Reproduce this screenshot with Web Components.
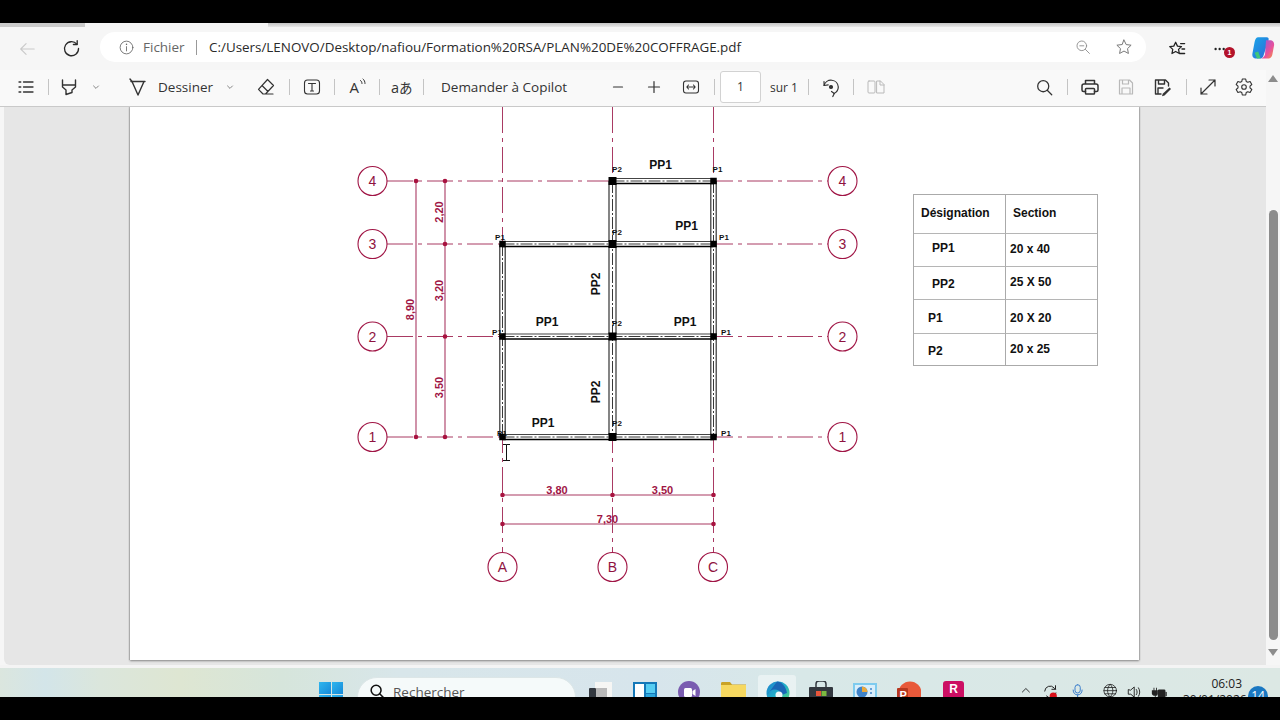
<!DOCTYPE html>
<html lang="fr"><head><meta charset="utf-8"><title>PLAN DE COFFRAGE</title>
<style>html,body{margin:0;background:#000;width:1280px;height:720px;overflow:hidden}</style></head>
<body>
<app-shell>
  <browser-bar></browser-bar>
  <viewer-area>
    <pdf-toolbar></pdf-toolbar>
    <pdf-view>
      <plan-drawing></plan-drawing>
      <spec-table></spec-table>
    </pdf-view>
  </viewer-area>
  <win-taskbar></win-taskbar>
</app-shell>
<script>
const S=(b,w=1.3)=>`<g fill="none" stroke="currentColor" stroke-width="${w}" stroke-linecap="round" stroke-linejoin="round">${b}</g>`;
const ICONS={
 back:S('<path d="M18 10H3M9 4 3 10l6 6"/>',1.2),
 refresh:S('<path d="M15.6 5.4A7.4 7.4 0 1 0 17.4 10"/><path d="M16 1.8v4h-4"/>',1.4),
 info:S('<circle cx="10" cy="10" r="7.5"/><path d="M10 9v5"/><path d="M10 6v.4" stroke-width="1.6"/>',1),
 zoomout:S('<circle cx="8.5" cy="8.5" r="6"/><path d="M13 13l5 5M6 8.5h5"/>',1.1),
 star:S('<path d="M10 2.3l2.4 5 5.5.7-4 3.8 1 5.4-4.900-2.700-4.900 2.700 1-5.400-4-3.800 5.500-.7z"/>',1.1),
 fav:S('<path d="M8.500 2.500l2 4.300 4.500.5-3.300 3.100.9 4.600-4.100-2.300-4.100 2.300.9-4.600L1.900 7.300l4.500-.5z"/><path d="M14 4h4.500M15.500 10h3M13 15h5.500"/>',1.4),
 dots:'<g fill="#222"><circle cx="4" cy="10" r="1.300"/><circle cx="8.500" cy="10" r="1.300"/><circle cx="13" cy="10" r="1.300"/></g>',
 copilot:'<defs><linearGradient id="c1" x1="0" y1="0" x2="1" y2="1"><stop offset="0" stop-color="#19a5e8"/><stop offset="1" stop-color="#2c6bd8"/></linearGradient><linearGradient id="c2" x1="0" y1="0" x2="1" y2="1"><stop offset="0" stop-color="#8a5be0"/><stop offset=".6" stop-color="#e8509c"/><stop offset="1" stop-color="#f59a3c"/></linearGradient></defs><path d="M6 1h7c1.500 0 2 1 1.600 2.500L10.500 16c-.5 1.800-1.500 2.800-3.500 2.800H4.500C2 18.800.7 17 1.200 14.500L3 5C3.500 2.500 4.500 1 6 1z" fill="url(#c1)"/><path d="M12.500 3.500h3.500c2.500 0 3.600 2 3.200 4.500l-1.400 7.500c-.5 2.300-2 3.300-4 3.300H8.500c2-.6 2.700-1.800 3.200-3.500z" fill="url(#c2)"/><path d="M3 14l3-1 2 5.500-3 .3z" fill="#3fc67a"/>',
 list:S('<path d="M3 5h1.800M3 10h1.800M3 15h1.800M7.500 5H17M7.500 10H17M7.500 15H17"/>',1.3),
 highlight:S('<path d="M3.500 3v7l3.500 3v4.500l6-2V13l3.500-3V3M3.500 8h13"/>',1.4),
 chev:S('<path d="M6.500 8.500 10 12l3.500-3.500"/>',1),
 draw:S('<path d="M3 4.500h14M4 4.500 10 18l6-13.500"/><path d="M2 2l2 2.500"/>',1.4),
 eraser:S('<path d="M11.500 2.500l6 6-8 8.500H7L2.500 12.300zM6 8.500l6 6M7 17h10"/>',1.2),
 textbox:S('<rect x="2.500" y="3" width="15" height="14" rx="3"/><path d="M6.500 6.500h7M10 6.500V14M8.500 14h3"/>',1.1),
 read:'<text x="2.500" y="15.500" font-family="Open Sans,sans-serif" font-size="15" fill="currentColor">A</text>'+S('<path d="M13.500 3.500c1 .8 1.500 1.700 1.500 3M16 2c1.300 1 2 2.500 2 4.500"/>',1),
 translate:'<text x="-1" y="15.500" font-family="Open Sans,Noto Sans CJK JP,sans-serif" font-size="14.500" fill="currentColor">a</text><text x="7" y="15.500" font-family="Noto Sans CJK JP,sans-serif" font-size="13.500" fill="currentColor">あ</text>',
 minus:S('<path d="M5.500 10h9"/>',1.2),
 plus:S('<path d="M4.500 10h11M10 4.500v11"/>',1.2),
 fit:S('<rect x="2.500" y="4" width="15" height="12" rx="2.500"/><path d="M6 10h8M7.500 8 5.800 10l1.700 2M12.500 8l1.700 2-1.700 2"/>',1.1),
 rotate:S('<path d="M3 8.500A7.300 7.300 0 0 1 17.300 10a7.300 7.300 0 0 1-4.300 6.500"/><path d="M3 4.500l.2 4 4-.7M10.500 14.500l2.800 2-1.500 3"/><circle cx="10" cy="10" r="1.500" fill="currentColor"/>',1.2),
 twopage:S('<rect x="2" y="4" width="7" height="12" rx="1"/><path d="M11 4h3.500l3.500 3.500V16h-7zM14 4v4h4"/>',1),
 search:S('<circle cx="8.500" cy="8.500" r="6.500"/><path d="M13.200 13.200l5.300 5.300"/>',1.500),
 print:S('<path d="M5.500 7V3.500h9V7M5.500 14.500H3.500a1.500 1.500 0 0 1-1.500-1.500V9a2 2 0 0 1 2-2h12a2 2 0 0 1 2 2v4a1.500 1.500 0 0 1-1.500 1.500h-2"/><rect x="5.500" y="11.500" width="9" height="5.500" rx=".8"/>',1.5),
 save:S('<path d="M3.500 3h10l3 3v11h-13zM6.500 3v4h6V3M6 17v-6h8v6"/>',1.2),
 saveas:S('<path d="M9 17H3.500V3h10l3 3v3M6.500 3v4h6V3M6 17v-6h5"/>',1.4)+'<path d="M17.500 10.500l1.500 1.500-6.500 6.500-2.500.8.700-2.600z" fill="currentColor"/>',
 expand:S('<path d="M3 17 17 3M11 3h6v6M3 11v6h6"/>',1.2),
 gear:S('<circle cx="10" cy="10" r="2.300"/><path d="M8.300 2h3.400l.5 2.400 1.600.9 2.300-.8 1.700 3-1.800 1.600v1.800l1.800 1.600-1.700 3-2.300-.8-1.600.9-.5 2.400H8.300l-.5-2.400-1.600-.9-2.300.8-1.700-3 1.800-1.600V9.100L2.200 7.500l1.700-3 2.300.8 1.600-.9z"/>',1.100),
 tsearch:S('<circle cx="9" cy="8" r="5.500"/><path d="M13 12l5 5"/>',1.700),
 tchev:S('<path d="M2 10l5-5 5 5"/>',1.200),
 sync:S('<path d="M3 9a6 6 0 0 1 10.500-3.500L15 7M15 3v4h-4M15.500 11a6 6 0 0 1-10.500 3.500"/>',1.100)+'<circle cx="12.500" cy="14.500" r="4" fill="#d9101a"/>',
 mic:S('<rect x="4" y="1" width="7" height="11" rx="3.500"/><path d="M1.500 8c0 4 2.500 6.500 6 6.500s6-2.500 6-6.500M7.500 14.500V18"/>',1.200),
 globe:S('<circle cx="8" cy="8.500" r="7"/><path d="M1 8.500h14M8 1.500c-4 4-4 10 0 14M8 1.500c4 4 4 10 0 14M2 5h12M2 12h12"/>',.9),
 speaker:S('<path d="M1.500 7v5h3l4 3.500v-12L4.500 7zM11 6.500c1.200 2 1.200 4 0 6M13.500 4.500c2 3 2 7 0 10"/>',1.100),
 battery:'<path d="M1 5h2V2h1v3h2V2h1v3h1v4c0 1.500-1 2.500-2.500 2.500V18h-1v-6.500C3 11.500 1 10.500 1 9z" fill="#222"/><rect x="8" y="4" width="9" height="11" rx="1.500" fill="#222"/><rect x="17" y="7" width="1.500" height="5" fill="#222"/>'
};
class UiIcon extends HTMLElement{
 connectedCallback(){
  const n=this.getAttribute('name'),s=+(this.getAttribute('size')||20),c=this.getAttribute('color')||'#333';
  this.attachShadow({mode:'open'}).innerHTML=`<style>:host{display:block;flex:none;width:${s}px;height:${s}px;color:${c}}svg{display:block;width:100%;height:100%;overflow:visible}</style><svg viewBox="0 0 20 20">${ICONS[n]||''}</svg>`;
 }
}
customElements.define('ui-icon',UiIcon);

class AppShell extends HTMLElement{constructor(){super();this.attachShadow({mode:'open'}).innerHTML=`<style>:host{display:flex;flex-direction:column;width:1280px;height:720px;box-sizing:border-box;padding:23px 0;background:#000;overflow:hidden;font-family:"Open Sans","Liberation Sans",sans-serif}</style><slot></slot>`}}
customElements.define('app-shell',AppShell);

class BrowserBar extends HTMLElement{constructor(){super();this.attachShadow({mode:'open'}).innerHTML=`<style>
:host{display:block;height:47px;background:#f6f6f6;flex:none}
.strip{display:flex;height:4px}
.strip i{display:block}
.a{width:85px;background:#cbcbcb}.b{width:183px;background:#f5f5f5}.c{flex:1;background:linear-gradient(#c4c4c4,#e8e8e8)}
.row{display:flex;align-items:center;height:43px;position:relative}
.pill{display:flex;align-items:center;width:1046px;height:30px;margin:-3px 0 0 19px;background:#fff;border-radius:15px;flex:none;font-size:13.5px;color:#2a2a2a;white-space:nowrap}
.fi{color:#666;margin-left:8px;width:40px}
.sep{width:1px;height:15px;background:#999;margin:0 12px 0 13px}
.url{width:535px;font-size:13.42px;flex:none}
.bd{position:absolute;left:1224px;top:20px;width:11px;height:11px;border-radius:50%;background:#b3122a;color:#fff;font:bold 7px/11px "Liberation Sans",sans-serif;text-align:center}
</style><div class="strip"><i class="a"></i><i class="b"></i><i class="c"></i></div>
<div class="row">
 <ui-icon name="back" size="18" color="#c9c9c9" style="margin-left:18px"></ui-icon>
 <ui-icon name="refresh" size="19" color="#2a2a2a" style="margin-left:26px"></ui-icon>
 <div class="pill">
  <ui-icon name="info" size="17" color="#666" style="margin-left:18px"></ui-icon>
  <span class="fi">Fichier</span><span class="sep"></span>
  <span class="url">C:/Users/LENOVO/Desktop/nafiou/Formation%20RSA/PLAN%20DE%20COFFRAGE.pdf</span>
  <ui-icon name="zoomout" size="16" color="#8a8a8a" style="margin-left:331px"></ui-icon>
  <ui-icon name="star" size="18" color="#777" style="margin-left:24px"></ui-icon>
 </div>
 <ui-icon name="fav" size="18" color="#222" style="margin-left:22px"></ui-icon>
 <ui-icon name="dots" size="18" style="margin-left:26px"></ui-icon>
 <ui-icon name="copilot" size="24" style="margin-left:21px;margin-top:-1px"></ui-icon>
 <span class="bd">1</span>
</div>`;
}}
customElements.define('browser-bar',BrowserBar);

class ViewerArea extends HTMLElement{constructor(){super();this.attachShadow({mode:'open'}).innerHTML=`<style>
:host{display:flex;height:595px;flex:none;background:#f6f6f6}
.main{width:1266px;display:flex;flex-direction:column;flex:none}
.sb{flex:1;display:flex;flex-direction:column;align-items:center;padding-top:5px;box-sizing:border-box}
.up,.dn{width:0;height:0;border-left:5px solid transparent;border-right:5px solid transparent;flex:none}
.up{border-bottom:7px solid #8c8c8c}
.dn{border-top:7px solid #8c8c8c;margin-top:9px}
.th{width:9px;height:430px;margin-top:128px;background:#8c8c8c;border-radius:5px;flex:none}
</style><div class="main"><slot></slot></div><div class="sb"><div class="up"></div><div class="th"></div><div class="dn"></div></div>`}}
customElements.define('viewer-area',ViewerArea);

class PdfToolbar extends HTMLElement{constructor(){super();
 const items=[['i','list',16],['s',0,12],['i','highlight',10],['c','chev',12],['i','draw',27],['t','Dessiner',10,53],['c','chev',14],['i','eraser',21],['s',0,13],['i','textbox',12],['s',0,12],['i','read',12],['s',0,12],['i','translate',12],['s',0,11],['t','Demander à Copilot',17,125],['i','minus',42],['i','plus',16],['i','fit',17],['s',0,13],['b','1',5],['t','sur 1',9,26],['s',0,12],['i','rotate',12],['s',0,12],['l','twopage',12],['i','search',150,0,17],['s',0,14],['i','print',12],['l','save',16],['i','saveas',16],['s',0,14],['i','expand',11],['i','gear',16]];
 const h=items.map(([k,v,m,w,z])=>{
  if(k=='s')return `<span class="sep" style="margin-left:${m}px"></span>`;
  if(k=='t')return `<span class="t" style="margin-left:${m}px;width:${w}px;${w==26?'font-size:12px':''}">${v}</span>`;
  if(k=='b')return `<span class="box" style="margin-left:${m}px">${v}</span>`;
  if(k=='c')return `<ui-icon name="${v}" size="14" color="#555" style="margin-left:${m-2}px;margin-right:-2px"></ui-icon>`;
  return `<ui-icon name="${v}" ${z?`size="${z}"`:''} color="${k=='l'?'#b9b9b9':'#333'}" style="margin-left:${m}px"></ui-icon>`;
 }).join('');
 this.attachShadow({mode:'open'}).innerHTML=`<style>
:host{display:flex;align-items:center;height:37px;flex:none;background:#f9f9f9;border-bottom:1px solid #c9c9c9;box-sizing:border-box;padding-bottom:2px;font-size:13.5px;color:#333}
.sep{width:1px;height:16px;background:#c4c4c4;flex:none}
.t{flex:none;white-space:nowrap}
.box{flex:none;width:41px;height:32px;box-sizing:border-box;border:1px solid #d2d2d2;border-radius:3px;background:#fff;text-align:center;line-height:30px;font-size:12px}
</style>${h}`}}
customElements.define('pdf-toolbar',PdfToolbar);

class PdfView extends HTMLElement{constructor(){super();this.attachShadow({mode:'open'}).innerHTML=`<style>
:host{display:block;flex:1;margin-left:4px;background:#e6e6e6;border-bottom-left-radius:6px;min-height:0;overflow:hidden}
.page{display:flex;width:1009px;height:553px;margin-left:126px;background:#fff;box-shadow:0 1px 2px #888,-1px 0 1px #bbb,1px 0 1px #bbb}
</style><div class="page"><slot></slot></div>`}}
customElements.define('pdf-view',PdfView);

class PlanDrawing extends HTMLElement{constructor(){super();
 const R='#a93a63',D='#a01545',X=[502.5,612.5,713.5],Y=[181,244,336.5,437];
 let o='';
 const l=(a,b,c,d,s,w,da)=>`<line x1="${a}" y1="${b}" x2="${c}" y2="${d}" stroke="${s}" stroke-width="${w}"${da?` stroke-dasharray="${da}"`:''}/>`;
 const ax='26 5 4 5';
 Y.forEach(y=>{o+=l(387,y,828,y,R,1,ax)});
 X.forEach(x=>{o+=l(x,107,x,552,R,1,ax)});
 o+=l(416,181,416,437,R,1.100)+l(445,181,445,437,R,1.100)+l(502.5,495,713.5,495,R,1.100)+l(502.5,524,713.5,524,R,1.100);
 [[416,181],[445,181],[445,244],[445,336.5],[445,437],[416,437],[502.5,495],[612.5,495],[713.5,495],[502.5,524],[713.5,524]].forEach(([x,y])=>o+=`<circle cx="${x}" cy="${y}" r="2.300" fill="#a8123f"/>`);
 const hb=(a,b,y)=>`<rect x="${a}" y="${y-2.5}" width="${b-a}" height="5" fill="#fff"/>`+l(a,y-2.5,b,y-2.5,'#444',1.200)+l(a,y+2.5,b,y+2.5,'#000',1.400)+l(a,y,b,y,'#222',.9,'12 2 2 2');
 const vb=(x,a,b,h)=>`<rect x="${x-h}" y="${a}" width="${2*h}" height="${b-a}" fill="#fff"/>`+l(x-h,a,x-h,b,'#333',1.200)+l(x+h,a,x+h,b,'#333',1.200)+l(x,a,x,b,'#222',.9,'12 2 2 2');
 o+=vb(502.5,244,437,2.700)+vb(612.5,181,437,3.500)+vb(713.5,181,437,2.700);
 o+=hb(612.5,713.5,181)+hb(502.5,713.5,244)+hb(502.5,713.5,336.5)+hb(502.5,713.5,437);
 [[612.5,181,8],[713.5,181,6.500],[502.5,244,6.500],[612.5,244,8],[713.5,244,6.500],[502.5,336.5,6.500],[612.5,336.5,8],[713.5,336.5,6.500],[502.5,437,6.500],[612.5,437,8],[713.5,437,6.500]].forEach(([x,y,s])=>o+=`<rect x="${x-s/2}" y="${y-s/2}" width="${s}" height="${s}" fill="#000"/>`);
 const bub=(x,y,t)=>`<circle cx="${x}" cy="${y}" r="14.500" fill="#fff" stroke="${D}" stroke-width="1.100"/><text x="${x}" y="${y+5}" text-anchor="middle" font-size="14" fill="#8f1240">${t}</text>`;
 [['4',181],['3',244],['2',336.5],['1',437]].forEach(([t,y])=>{o+=bub(372.5,y,t)+bub(842.5,y,t)});
 [['A',502.5],['B',612.5],['C',713]].forEach(([t,x])=>o+=bub(x,567,t));
 const pl=(x,y,t)=>`<text x="${x}" y="${y}" text-anchor="middle" font-size="12" font-weight="700" fill="#111">${t}</text>`;
 [[660.5,169,'PP1'],[686.5,230,'PP1'],[547,326,'PP1'],[685,326,'PP1'],[543,427,'PP1']].forEach(a=>o+=pl(...a));
 [[600,284],[600,392]].forEach(([x,y])=>o+=`<text transform="translate(${x} ${y}) rotate(-90)" text-anchor="middle" font-size="12" font-weight="700" fill="#111">PP2</text>`);
 [[617,172,'P2'],[717.500,172,'P1'],[500,239.500,'P1'],[617,235,'P2'],[724,240,'P1'],[617,326,'P2'],[497,335,'P1'],[726,334.500,'P1'],[502,435.500,'P1'],[617,426,'P2'],[726,436,'P1']].forEach(([x,y,t])=>o+=`<text x="${x}" y="${y}" text-anchor="middle" font-size="8" font-weight="700" fill="#111">${t}</text>`);
 const dt=(x,y,t)=>`<text x="${x}" y="${y}" text-anchor="middle" font-size="11" font-weight="700" fill="#a01545">${t}</text>`;
 const dv=(x,y,t)=>`<text transform="translate(${x} ${y}) rotate(-90)" text-anchor="middle" font-size="11" font-weight="700" fill="#a01545">${t}</text>`;
 o+=dt(557,494,'3,80')+dt(662.500,494,'3,50')+dt(607.500,523,'7,30');
 o+=dv(442.500,212,'2,20')+dv(442.500,290.500,'3,20')+dv(442.500,387.500,'3,50')+dv(413.500,309.500,'8,90');
 o+=`<path d="M503 444.500h3.500v16M510 444.500h-3.500M503 460.500h7" fill="none" stroke="#111" stroke-width="1"/>`;
 this.attachShadow({mode:'open'}).innerHTML=`<style>:host{display:block;flex:none;width:783px;height:553px}svg{display:block;font-family:"Liberation Sans",Arial,sans-serif}</style><svg width="783" height="553" viewBox="130 107 783 553">${o}</svg>`;
}}
customElements.define('plan-drawing',PlanDrawing);

class SpecTable extends HTMLElement{constructor(){super();
 const rows=[[39,'Désignation',8,-1,'Section',7,-1],[33,'PP1',19,-2,'20 x 40',4,-1],[33,'PP2',19,1,'25 X 50',4,-1],[34,'P1',15,1,'20 X 20',4,1],[33,'P2',15,1,'20 x 25',4,-1]];
 const p=(r,x,y)=>`padding-left:${x}px;height:${r}px;padding-top:${Math.max(y,0)*2}px;padding-bottom:${Math.max(-y,0)*2}px`;
 const h=rows.map(([r,a,ax,ay,b,bx,by])=>`<div class="c" style="${p(r,ax,ay)}">${a}</div><div class="c" style="${p(r,bx,by)}">${b}</div>`).join('');
 this.attachShadow({mode:'open'}).innerHTML=`<style>
:host{display:grid;grid-template-columns:93px 92px;flex:none;align-self:flex-start;margin-top:87px;box-sizing:border-box;font:700 12px "Liberation Sans",Arial,sans-serif;color:#111;outline:1px solid #aaa;outline-offset:-1px}
.c{display:flex;align-items:center;box-sizing:border-box;border-top:1px solid #b5b5b5;border-right:1px solid #aaa}
.c:nth-child(-n+2){border-top:0}
</style>${h}`;
}}
customElements.define('spec-table',SpecTable);

class WinTaskbar extends HTMLElement{constructor(){super();this.attachShadow({mode:'open'}).innerHTML=`<style>
:host{display:flex;align-items:flex-start;height:32px;box-sizing:border-box;border-top:3px solid #f4f4f4;flex:none;overflow:hidden;background:linear-gradient(90deg,#dbe6de 0,#d3e5e9 45px,#dbe6dc 100px,#dee6d2 180px,#d6e5db 280px,#d8e6ea 400px,#d7e5ec 650px,#d8e8e8 800px,#dce8e4 1280px);color:#222}
.win{display:grid;grid-template-columns:11.500px 11.500px;grid-auto-rows:11.500px;gap:1px;margin:14px 0 0 319px;flex:none}
.win i{background:linear-gradient(135deg,#2fb6ee,#1689d8)}
.search{display:flex;width:219px;height:40px;margin:9px 0 0 14px;flex:none;box-sizing:border-box;border:1px solid #dce6e7;border-radius:20px;background:#f5fafa;font-size:13.500px;color:#555;padding:5px 0 0 10px;align-items:flex-start}
.search span{margin-left:7px;line-height:18px}
.ap{flex:none;display:block}
.clock{flex:none;width:59px;text-align:right;font-size:12px;line-height:16px;margin-top:8px;white-space:nowrap}
.badge{flex:none;width:20px;height:20px;border-radius:50%;background:#1a78c2;color:#fff;font-size:12px;line-height:20px;text-align:center;margin:18px 0 0 6px}
.hov{flex:none;width:38px;height:24px;margin:7px 0 0 12px;background:rgba(255,255,255,.45);border-radius:3px 3px 0 0;padding:6px 0 0 8px;box-sizing:border-box}
</style>
<div class="win"><i></i><i></i><i></i><i></i></div>
<div class="search"><ui-icon name="tsearch" size="18" color="#111"></ui-icon><span>Rechercher</span></div>
<svg class="ap" style="margin:14px 0 0 13px" width="23" height="20" viewBox="0 0 23 20"><rect x="6" width="17" height="20" fill="#f6f6f4"/><rect x="7" y="6" width="11" height="14" fill="#b9b9b9"/><rect y="6" width="7" height="14" rx="1" fill="#33383f"/></svg>
<svg class="ap" style="margin:14px 0 0 21px" width="24" height="20" viewBox="0 0 24 20"><rect width="24" height="20" fill="#1478b8"/><rect x="2" y="2" width="9" height="18" fill="#fff"/><rect x="13" y="2" width="9" height="9" fill="#56cdf2"/><rect x="13" y="12" width="9" height="8" fill="#2da7dd"/></svg>
<svg class="ap" style="margin:13px 0 0 21px" width="22" height="22" viewBox="0 0 22 22"><circle cx="11" cy="11" r="11" fill="#7a5cb0"/><rect x="6" y="7" width="8" height="9" rx="1.500" fill="#fff"/><path d="M14.500 10l3-2v7l-3-2z" fill="#fff"/></svg>
<svg class="ap" style="margin:14px 0 0 21px" width="25" height="20" viewBox="0 0 25 20"><path d="M0 1.500C0 .5.500 0 1.500 0H9l2 2.500H25V6H0z" fill="#c9a227"/><rect y="3" width="25" height="17" fill="#f6d860"/></svg>
<div class="hov"><svg class="ap" width="24" height="24" viewBox="0 0 24 24"><defs><linearGradient id="e" x1="0" y1="0" x2="1" y2="1"><stop offset="0" stop-color="#1e7fcf"/><stop offset=".5" stop-color="#22b0c8"/><stop offset="1" stop-color="#62dd70"/></linearGradient></defs><circle cx="12" cy="12" r="11.500" fill="url(#e)"/><path d="M1 14C3 9 9 7 12.500 9.500c2 1.500 1.500 3.500.5 4.500 3 0 5-1 8-2C20 5 15 .5 11 .5" fill="#1a66b5"/><circle cx="13" cy="14" r="3.500" fill="#eef6f6"/></svg></div>
<svg class="ap" style="margin:13px 0 0 13px" width="24" height="20" viewBox="0 0 24 20"><path d="M7 6V3c0-2 1-3 3-3h4c2 0 3 1 3 3v3" fill="none" stroke="#33383f" stroke-width="1.500"/><rect y="6" width="24" height="14" rx="1" fill="#33383f"/><rect x="7" y="10" width="5" height="5" fill="#e8553a"/><rect x="12.500" y="10" width="5" height="5" fill="#7cb940"/></svg>
<svg class="ap" style="margin:15px 0 0 20px" width="24" height="16" viewBox="0 0 24 16"><rect width="24" height="16" fill="#7ecbee"/><rect x="2" y="2" width="20" height="14" fill="#d9eefa"/><circle cx="9" cy="9" r="5.500" fill="#3f83c8"/><path d="M9 9V3.500A5.500 5.500 0 0 1 14.500 9z" fill="#eaa83a"/><circle cx="18" cy="6" r="1" fill="#3f83c8"/><circle cx="18" cy="10" r="1" fill="#3f83c8"/></svg>
<svg class="ap" style="margin:13px 0 0 20px" width="24" height="24" viewBox="0 0 24 24"><circle cx="13" cy="12" r="11.500" fill="#e8593a"/><rect y="7" width="11" height="14" rx="1" fill="#b7371f"/><text x="2.500" y="18" font-family="Liberation Sans,sans-serif" font-size="11" font-weight="700" fill="#fff">P</text></svg>
<span class="ap" style="margin:13px 0 0 22px;width:21px;height:24px;border-radius:3px;background:#cc0f63;color:#fff;font:700 12px/17px 'Liberation Sans',sans-serif;text-align:center">R</span>
<ui-icon name="tchev" size="14" color="#111" style="margin:17px 0 0 57px"></ui-icon>
<ui-icon name="sync" size="18" color="#222" style="margin:15px 0 0 7px"></ui-icon>
<ui-icon name="mic" size="15" color="#2a73c8" style="margin:16px 0 0 12px"></ui-icon>
<ui-icon name="globe" size="18" color="#222" style="margin:15px 0 0 16px"></ui-icon>
<ui-icon name="speaker" size="17" color="#222" style="margin:16px 0 0 6px"></ui-icon>
<ui-icon name="battery" size="17" color="#222" style="margin:18px 0 0 7px"></ui-icon>
<div class="clock" style="margin-left:15px">06:03<br>30/01/2026</div>
<div class="badge">14</div>`}}
customElements.define('win-taskbar',WinTaskbar);
</script>
</body></html>
